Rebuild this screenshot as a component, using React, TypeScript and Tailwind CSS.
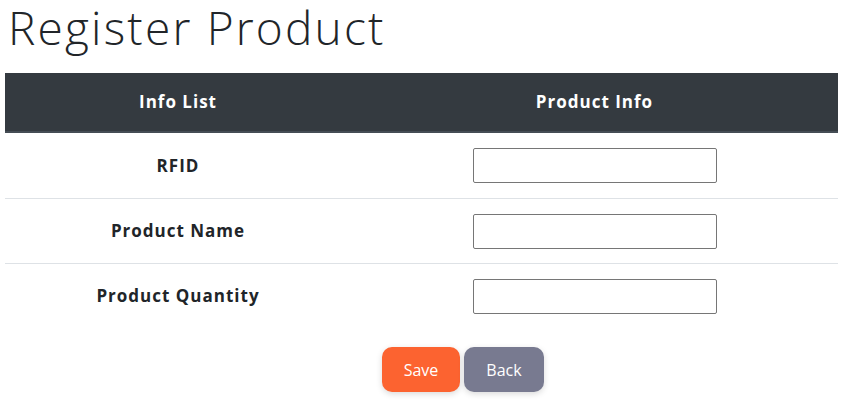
const rows = ["RFID", "Product Name", "Product Quantity"];

export default function App() {
  return (
    <div className="min-h-screen bg-white text-[#212529]" style={{ fontFamily: '"Open Sans", sans-serif' }}>
      <h1 className="pl-2 text-[46px] font-light leading-[55px] tracking-[2.2px] text-[#212529]">
        Register Product
      </h1>
      <div className="mx-[5px] mt-[18px]">
        <div className="grid h-[60px] grid-cols-[346px_1fr] border-b-2 border-[#454d55] bg-[#343a40] text-[17px] font-bold tracking-[1px] text-white">
          <div className="flex items-center justify-center">Info List</div>
          <div className="flex items-center justify-center">Product Info</div>
        </div>
        {rows.map((label, i) => (
          <div
            key={label}
            className={`grid h-[65px] grid-cols-[346px_1fr] ${i > 0 ? "border-t border-[#dee2e6]" : ""}`}
          >
            <div className="flex items-center justify-center text-[17px] font-bold tracking-[1px]">{label}</div>
            <div className="flex items-center justify-center">
              <input
                type="text"
                className="h-[35px] w-[244px] rounded-[2px] border border-[#767676] bg-white"
              />
            </div>
          </div>
        ))}
      </div>
      <div className="mt-[19px] flex gap-[4px] pl-[382px]">
        <button className="h-[45px] w-[78px] rounded-[10px] bg-[#fc6330] text-[16px] text-white shadow-[0_2px_6px_rgba(0,0,0,0.15)]">
          Save
        </button>
        <button className="h-[45px] w-[80px] rounded-[10px] bg-[#787a90] text-[16px] text-white shadow-[0_2px_6px_rgba(0,0,0,0.15)]">
          Back
        </button>
      </div>
    </div>
  );
}
